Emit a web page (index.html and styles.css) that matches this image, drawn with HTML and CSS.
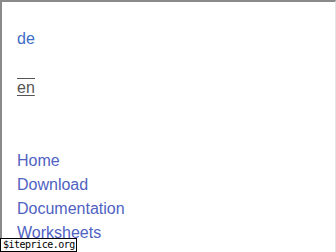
FILE: index.html
```html
<!DOCTYPE html>
<html lang="de">
<head>
    <meta charset="UTF-8">
    <meta name="viewport" content="width=device-width, initial-scale=1.0">
    <title>Navigation</title>
    <link rel="stylesheet" href="styles.css">
</head>
<body>
    <div class="frame">
        <ul class="lang">
            <li><a href="#" class="lang-link">de</a></li>
            <li class="lang-current"><a href="#" class="lang-link current">en</a></li>
        </ul>

        <ul class="menu">
            <li><a href="#">Home</a></li>
            <li><a href="#">Download</a></li>
            <li><a href="#">Documentation</a></li>
            <li><a href="#">Worksheets</a></li>
        </ul>
    </div>
    <div class="stamp">$iteprice.org</div>
</body>
</html>
```

FILE: styles.css
```css
* {
    margin: 0;
    padding: 0;
    box-sizing: border-box;
}

html, body {
    height: 100%;
    overflow: hidden;
}

body {
    background: #ffffff;
    font-family: Arial, "Liberation Sans", sans-serif;
    font-size: 16px;
}

.frame {
    height: 100%;
    border-top: 2px solid #8a8a8a;
    border-left: 2px solid #8a8a8a;
    border-right: 1px solid #e4e4e4;
    padding: 28px 0 0 15px;
}

ul {
    list-style: none;
}

a {
    text-decoration: none;
}

.lang li {
    line-height: 18px;
}

.lang-current {
    margin-top: 28px;
    padding-top: 2px;
}

.lang-link {
    color: #3d6cc6;
}

.lang-link.current {
    color: #555555;
    text-decoration: underline;
    text-underline-offset: 2px;
    border-top: 1px solid #555555;
    display: inline-block;
    line-height: 17px;
}

.menu {
    margin-top: 52px;
}

.menu li {
    line-height: 24px;
}

.menu a {
    color: #4f62c2;
}

.stamp {
    position: absolute;
    left: 0;
    bottom: 0;
    width: 77px;
    height: 14px;
    background: #ffffff;
    border: 1px solid #000000;
    font-family: "DejaVu Sans Mono", monospace;
    font-size: 10px;
    letter-spacing: -0.5px;
    line-height: 12px;
    padding-left: 2px;
    color: #000000;
}
```
